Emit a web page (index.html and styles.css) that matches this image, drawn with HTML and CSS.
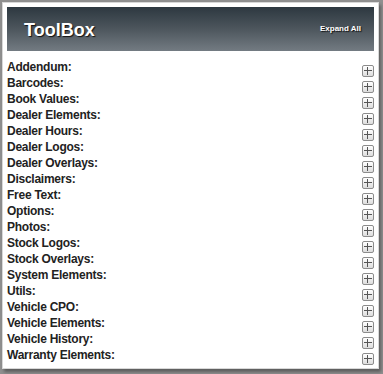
FILE: index.html
```html
<!DOCTYPE html>
<html>
<head>
<meta charset="utf-8">
<link rel="stylesheet" href="styles.css">
</head>
<body>
<div class="panel">
  <div class="header">
    <span class="title">ToolBox</span>
    <span class="expand">Expand All</span>
  </div>
  <ul class="list">
    <li class="row"><span class="label">Addendum:</span><span class="plus"></span></li>
    <li class="row"><span class="label">Barcodes:</span><span class="plus"></span></li>
    <li class="row"><span class="label">Book Values:</span><span class="plus"></span></li>
    <li class="row"><span class="label">Dealer Elements:</span><span class="plus"></span></li>
    <li class="row"><span class="label">Dealer Hours:</span><span class="plus"></span></li>
    <li class="row"><span class="label">Dealer Logos:</span><span class="plus"></span></li>
    <li class="row"><span class="label">Dealer Overlays:</span><span class="plus"></span></li>
    <li class="row"><span class="label">Disclaimers:</span><span class="plus"></span></li>
    <li class="row"><span class="label">Free Text:</span><span class="plus"></span></li>
    <li class="row"><span class="label">Options:</span><span class="plus"></span></li>
    <li class="row"><span class="label">Photos:</span><span class="plus"></span></li>
    <li class="row"><span class="label">Stock Logos:</span><span class="plus"></span></li>
    <li class="row"><span class="label">Stock Overlays:</span><span class="plus"></span></li>
    <li class="row"><span class="label">System Elements:</span><span class="plus"></span></li>
    <li class="row"><span class="label">Utils:</span><span class="plus"></span></li>
    <li class="row"><span class="label">Vehicle CPO:</span><span class="plus"></span></li>
    <li class="row"><span class="label">Vehicle Elements:</span><span class="plus"></span></li>
    <li class="row"><span class="label">Vehicle History:</span><span class="plus"></span></li>
    <li class="row"><span class="label">Warranty Elements:</span><span class="plus"></span></li>
  </ul>
</div>
</body>
</html>
```

FILE: styles.css
```css
html, body {
  margin: 0;
  padding: 0;
  background: #8f8f8f;
  height: 100%;
  overflow: hidden;
}

body {
  padding: 2px 4px 0 2px;
  box-sizing: border-box;
  font-family: "Liberation Sans", Arial, sans-serif;
}

.panel {
  width: 377px;
  height: 367px;
  box-sizing: border-box;
  background: #fff;
  border: 1px solid #d8d8d8;
  padding: 4px;
  box-shadow: 2px 3px 3px rgba(0, 0, 0, 0.35);
  display: flex;
  flex-direction: column;
}

.header {
  height: 44px;
  flex: none;
  background: linear-gradient(to bottom, #2d3840 0%, #4d565d 50%, #737b82 100%);
  display: flex;
  align-items: center;
  justify-content: space-between;
  padding: 0 13px 0 17px;
}

.title {
  color: #fff;
  font-weight: bold;
  font-size: 18px;
  text-shadow: 1px 1px 1px #111;
  margin-top: 2px;
}

.expand {
  color: #fff;
  font-weight: bold;
  font-size: 8px;
  text-shadow: 1px 1px 1px #111;
  margin-top: -1px;
}

.list {
  list-style: none;
  margin: 8px 0 0 0;
  padding: 0;
}

.row {
  height: 16px;
  display: flex;
  justify-content: space-between;
  align-items: flex-start;
}

.label {
  font-weight: bold;
  font-size: 12px;
  letter-spacing: -0.25px;
  line-height: 16px;
  color: #222;
}

.plus {
  position: relative;
  width: 12px;
  height: 12px;
  box-sizing: border-box;
  margin-top: 6px;
  border: 1px solid #8c8c8c;
  border-radius: 2px;
  background: linear-gradient(to bottom, #ffffff, #dcdcdc);
}

.plus::before,
.plus::after {
  content: "";
  position: absolute;
  background: #555;
}

.plus::before {
  left: 1px;
  right: 1px;
  top: 4px;
  height: 1px;
}

.plus::after {
  top: 1px;
  bottom: 1px;
  left: 4px;
  width: 1px;
}
```
